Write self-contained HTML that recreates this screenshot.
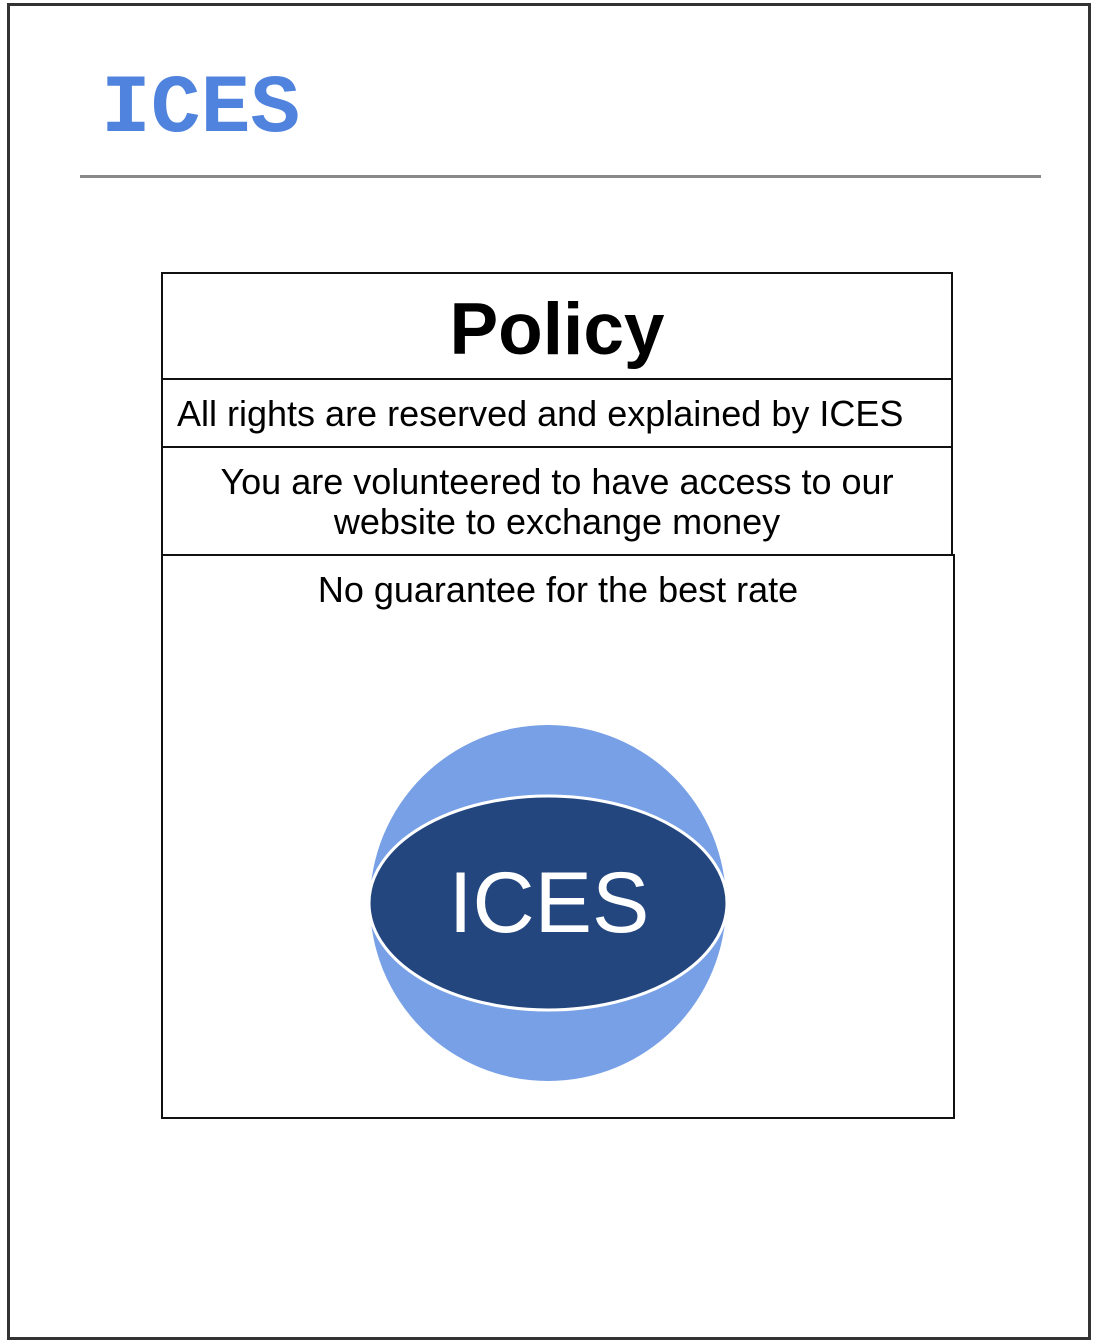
<!DOCTYPE html>
<html><head><style>
body{margin:0;width:1098px;height:1344px;background:#fff;position:relative;overflow:hidden;font-family:"Liberation Sans",sans-serif;}
.frame{position:absolute;left:7px;top:3px;width:1078px;height:1331px;border:3px solid #333;}
.logo{position:absolute;left:101px;top:68px;font-family:"Liberation Mono",monospace;font-weight:bold;font-size:83px;color:#5083dd;line-height:83px;}
.hr{position:absolute;left:80px;top:175px;width:961px;height:3px;background:#888;}
.b{position:absolute;border:2px solid #111;box-sizing:border-box;color:#000;}
</style></head><body>
<div class="frame"></div>
<div class="logo">ICES</div>
<div class="hr"></div>
<div class="b" style="left:161px;top:272px;width:792px;height:108px;text-align:center;font-weight:bold;font-size:73px;line-height:112px;">Policy</div>
<div class="b" style="left:161px;top:378px;width:792px;height:70px;font-size:36px;line-height:68px;padding-left:14px;">All rights are reserved and explained by ICES</div>
<div class="b" style="left:161px;top:446px;width:792px;height:110px;font-size:36px;line-height:40px;text-align:center;padding-top:14px;">You are volunteered to have access to our<br>website to exchange money</div>
<div class="b" style="left:161px;top:554px;width:794px;height:565px;font-size:36px;text-align:center;line-height:40px;padding-top:14px;">No guarantee for the best rate</div>
<svg style="position:absolute;left:0;top:0" width="1098" height="1344">
<circle cx="548" cy="903" r="178" fill="#78a0e6"/>
<ellipse cx="548" cy="903" rx="179" ry="107" fill="#23467f" stroke="#fff" stroke-width="3"/>
<text x="549" y="932" text-anchor="middle" font-family="Liberation Sans" font-size="86" fill="#fff">ICES</text>
</svg>
</body></html>
